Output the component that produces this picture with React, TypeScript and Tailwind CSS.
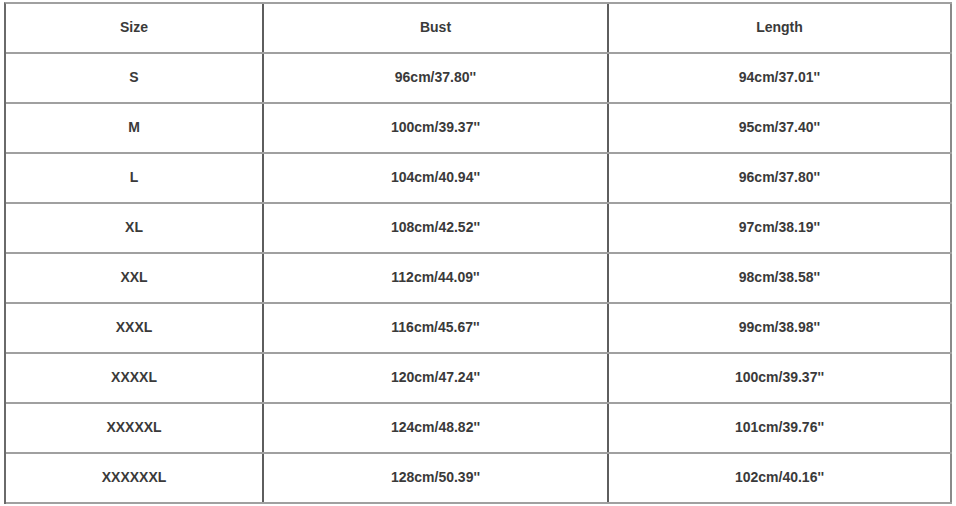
import React from "react";

const rows: [string, string, string][] = [
  ["Size", "Bust", "Length"],
  ["S", "96cm/37.80''", "94cm/37.01''"],
  ["M", "100cm/39.37''", "95cm/37.40''"],
  ["L", "104cm/40.94''", "96cm/37.80''"],
  ["XL", "108cm/42.52''", "97cm/38.19''"],
  ["XXL", "112cm/44.09''", "98cm/38.58''"],
  ["XXXL", "116cm/45.67''", "99cm/38.98''"],
  ["XXXXL", "120cm/47.24''", "100cm/39.37''"],
  ["XXXXXL", "124cm/48.82''", "101cm/39.76''"],
  ["XXXXXXL", "128cm/50.39''", "102cm/40.16''"],
];

export default function App() {
  return (
    <div className="w-[956px] h-[506px] bg-white pl-[4px] pt-[2px] font-['Liberation_Sans',Arial,sans-serif]">
      <div className="w-[948px] border-t-2 border-l-2 border-t-[#a0a0a0] border-l-[#6a6a6a]">
        {rows.map((r, i) => (
          <div key={i} className="flex h-[50px] border-b-2 border-[#a0a0a0]">
            <div className="w-[258px] pb-[2px] border-r-2 border-[#5e5e5e] flex items-center justify-center text-[14px] font-bold text-[#3a3a3a]">
              {r[0]}
            </div>
            <div className="w-[345px] pb-[2px] border-r-2 border-[#5e5e5e] flex items-center justify-center text-[14px] font-bold text-[#3a3a3a]">
              {r[1]}
            </div>
            <div className="w-[343px] pb-[2px] border-r-2 border-[#8a8a8a] flex items-center justify-center text-[14px] font-bold text-[#3a3a3a]">
              {r[2]}
            </div>
          </div>
        ))}
      </div>
    </div>
  );
}
